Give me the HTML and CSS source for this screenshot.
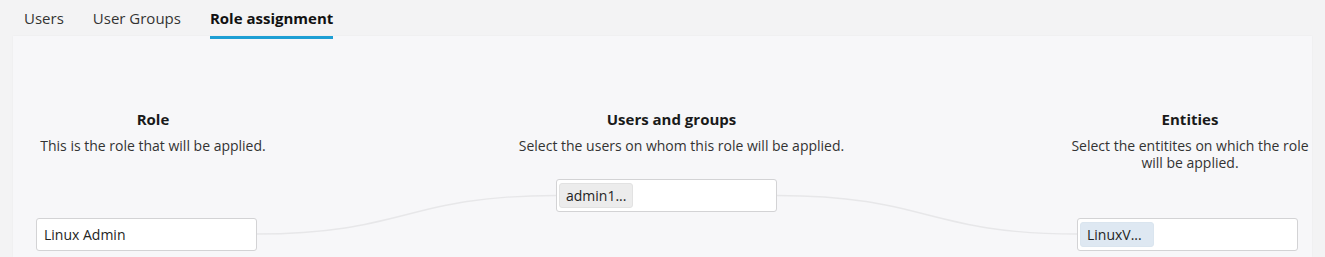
FILE: index.html
```html
<!DOCTYPE html>
<html lang="en">
<head>
<meta charset="utf-8">
<title>Role assignment</title>
<link rel="stylesheet" href="styles.css">
</head>
<body>
<nav class="tabs">
  <div class="tab">Users</div>
  <div class="tab">User Groups</div>
  <div class="tab tab-active">Role assignment</div>
</nav>
<section class="panel">
  <svg class="connectors" width="1299" height="221" viewBox="0 0 1299 221" aria-hidden="true">
    <path d="M243 198 C 393 198, 393 159.5, 543 159.5" />
    <path d="M764 159.5 C 914 159.5, 914 198, 1064 198" />
  </svg>
  <div class="grid">
    <div class="head">
      <div class="title">Role</div>
      <div class="sub">This is the role that will be applied.</div>
    </div>
    <div class="head head-mid">
      <div class="title">Users and groups</div>
      <div class="sub sub-mid">Select the users on whom this role will be applied.</div>
    </div>
    <div class="head">
      <div class="title">Entities</div>
      <div class="sub">Select the entitites on which the role will be applied.</div>
    </div>
    <div class="field field-side field-left"><span class="value">Linux Admin</span></div>
    <div class="field field-mid"><span class="chip">admin1...</span></div>
    <div class="field field-side field-right"><span class="chip chip-blue">LinuxV...</span></div>
  </div>
</section>
</body>
</html>
```
FILE: styles.css
```css
html, body {
  margin: 0;
  padding: 0;
}
body {
  background: #f3f3f4;
  font-family: "Segoe UI", "Open Sans", "Noto Sans", sans-serif;
  color: #242424;
  width: 1325px;
  height: 257px;
  overflow: hidden;
}
.tabs {
  position: relative;
  z-index: 1;
  display: flex;
  gap: 29px;
  padding-left: 24px;
  height: 36px;
}
.tab {
  font-size: 15px;
  line-height: 22px;
  padding-top: 7px;
  color: #333;
  box-sizing: border-box;
  height: 39px;
}
.tab-active {
  font-weight: 700;
  color: #111;
  border-bottom: 3px solid #1e9fd4;
}
.panel {
  position: relative;
  margin: 0 13px;
  background: #f7f7f9;
  height: 221px;
  box-shadow: 0 0 2px rgba(0,0,0,0.04);
}
.connectors {
  position: absolute;
  left: 0;
  top: 0;
  pointer-events: none;
}
.connectors path {
  fill: none;
  stroke: #e7e7e9;
  stroke-width: 1.3;
}
.grid {
  position: relative;
  display: grid;
  grid-template-columns: 244px 1fr 244px;
  padding: 72px 0 0 18px;
}
.head {
  text-align: center;
}
.title {
  font-size: 15px;
  font-weight: 700;
  line-height: 22px;
  color: #1a1a1a;
}
.sub {
  margin-top: 7px;
  font-size: 14px;
  line-height: 17px;
  color: #333;
}
.sub-mid {
  padding-left: 20px;
}
.field {
  box-sizing: border-box;
  width: 221px;
  height: 33px;
  background: #fff;
  border: 1px solid #d3d3d5;
  border-radius: 3px;
  display: flex;
  align-items: center;
  padding: 0 2px;
  font-size: 14px;
}
.field-side {
  margin-top: 47px;
}
.field-left {
  margin-left: 5px;
}
.field-right {
  margin-left: 9px;
}
.field-mid {
  margin-top: 8px;
  justify-self: center;
  margin-right: 10px;
}
.value {
  padding-left: 5px;
  color: #242424;
}
.chip {
  display: inline-flex;
  align-items: center;
  box-sizing: border-box;
  height: 25px;
  width: 74px;
  padding: 0 6px;
  background: #ececec;
  border: 1px solid #e2e2e2;
  border-radius: 3px;
  color: #242424;
  white-space: nowrap;
}
.chip-blue {
  background: #dee8f2;
  border-color: #dae5ef;
}
```
